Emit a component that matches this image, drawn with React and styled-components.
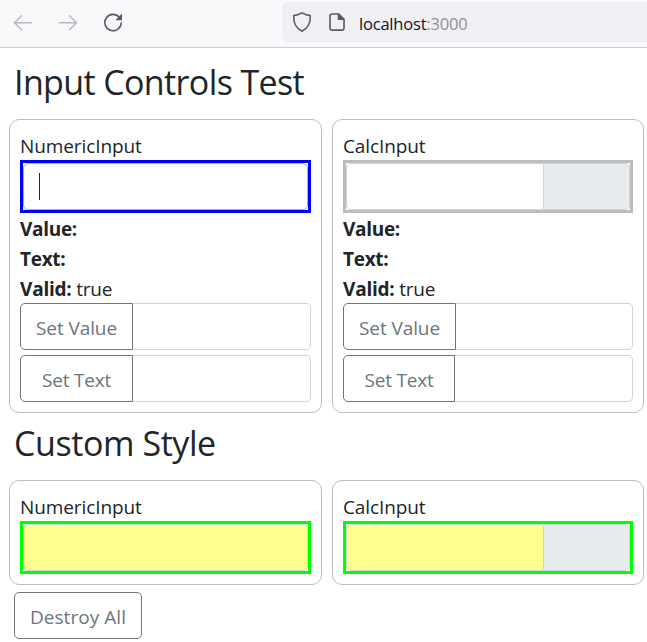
import React from "react";
import styled, { createGlobalStyle } from "styled-components";

const Global = createGlobalStyle`
  *, *::before, *::after { box-sizing: border-box; }
  body {
    margin: 0;
    overflow: hidden;
    background: #fff;
    color: #212529;
    font: 400 19px/30px "Open Sans", "Noto Sans", sans-serif;
  }
`;

const Toolbar = styled.header`
  display: flex;
  height: 48px;
  padding: 2px 0 0 11px;
  background: #f9f9fb;
  border-bottom: 1px solid #ccccd1;
`;

const NavIcons = styled.div`
  display: flex;
  gap: 21px;
  width: 271px;
  padding-top: 9px;
`;

const Icon = styled.svg`
  display: block;
  width: 24px;
  height: 24px;
  flex: none;
  fill: none;
  stroke: ${(p) => (p.$muted ? "#b9b9be" : "#5b5b66")};
  stroke-width: ${(p) => (p.$muted ? 1.5 : 1.6)};
  stroke-linecap: round;
  stroke-linejoin: round;
`;

const AddressBar = styled.div`
  display: flex;
  flex: 1;
  height: 40px;
  padding: 8px 0 0 8px;
  gap: 11px;
  background: #f0f0f4;
  border-radius: 5px 0 0 5px;
`;

const Address = styled.span`
  margin-left: -1px;
  font-size: 16.5px;
  line-height: 28px;
  letter-spacing: -0.2px;
  color: #15141a;
`;

const Port = styled.span`
  color: #8f8f95;
`;

const Page = styled.main`
  padding: 11px 3px 0 9px;
`;

const Title = styled.h1`
  margin: 0;
  padding: ${(p) => (p.$second ? "9px" : "2px")} 5px 0;
  height: ${(p) => (p.$second ? "67px" : "60px")};
  font-weight: 400;
  font-size: 34px;
  line-height: 42px;
  letter-spacing: ${(p) => p.$spacing};
`;

const Columns = styled.div`
  display: grid;
  grid-template-columns: 313px 312px;
  column-gap: 10px;
`;

const Card = styled.section`
  padding: 10px;
  border: 1px solid #bdbdbd;
  border-radius: 10px;
`;

const Line = styled.div`
  height: 30px;
  padding-top: 1px;
  letter-spacing: ${(p) => p.$spacing || "-0.22px"};
`;

const Label = styled(Line)`
  letter-spacing: ${(p) => p.$spacing || "-0.1px"};
`;

const Frame = styled.div`
  display: flex;
  height: 53px;
  border: 3px solid ${(p) => p.$color};
`;

const Field = styled.div`
  display: flex;
  align-items: center;
  flex: 1;
  padding-left: 15px;
  background: ${(p) => p.$fill || "#fff"};
  border: 1px solid ${(p) => (p.$focused ? "#86b7fe" : "#ced4da")};
  border-radius: ${(p) => (p.$joined ? "5px 0 0 5px" : "5px")};
`;

const Caret = styled.span`
  width: 1px;
  height: 27px;
  background: #212529;
`;

const Addon = styled.div`
  width: 86px;
  background: #e9ecef;
  border: 1px solid #ced4da;
  border-left: 0;
  border-radius: 0 5px 5px 0;
`;

const Group = styled.div`
  display: flex;
  height: 47px;
  & + & { margin-top: 5px; }
`;

const Button = styled.button`
  width: ${(p) => p.$width};
  height: 47px;
  padding: 2px 0 0;
  background: #fff;
  border: 1px solid #6c757d;
  border-radius: ${(p) => (p.$joined ? "5px 0 0 5px" : "5px")};
  color: #6c757d;
  font: inherit;
  letter-spacing: ${(p) => p.$spacing};
  white-space: nowrap;
`;

const GroupField = styled.div`
  flex: 1;
  border: 1px solid #ced4da;
  border-left: 0;
  border-radius: 0 5px 5px 0;
`;

const Footer = styled.footer`
  padding: 7px 5px 0;
`;

function NumericField({ color, fill, focused }) {
  return (
    <Frame $color={color}>
      <Field $fill={fill} $focused={focused}>{focused && <Caret />}</Field>
    </Frame>
  );
}

function CalcField({ color, fill }) {
  return (
    <Frame $color={color}>
      <Field $fill={fill} $joined />
      <Addon />
    </Frame>
  );
}

function Details({ textWidth }) {
  return (
    <>
      <Line $spacing="-0.3px"><b>Value:</b></Line>
      <Line $spacing="-0.3px"><b>Text:</b></Line>
      <Line><b>Valid:</b> true</Line>
      <Group>
        <Button $joined $width="113px" $spacing="-0.1px">Set Value</Button>
        <GroupField />
      </Group>
      <Group>
        <Button $joined $width={textWidth} $spacing="-0.2px">Set Text</Button>
        <GroupField />
      </Group>
    </>
  );
}

export default function App() {
  return (
    <>
      <Global />
      <Toolbar>
        <NavIcons>
          <Icon $muted viewBox="0 0 24 24"><path d="M20.5 11.8H3.5M10.5 4.8l-7 7 7 7" /></Icon>
          <Icon $muted viewBox="0 0 24 24"><path d="M3.5 11.8h17M13.5 4.8l7 7-7 7" /></Icon>
          <Icon viewBox="0 0 24 24">
            <path d="M18.2 6.2A8.2 8.2 0 1 0 20.2 12" />
            <path d="M20.5 3.8v5h-5z" fill="#5b5b66" strokeWidth="1" />
          </Icon>
        </NavIcons>
        <AddressBar>
          <Icon viewBox="0 0 24 24">
            <path d="M12 2.9Q7.6 5.3 3.8 5.6C3.2 12.8 6 18 12 21.3c6-3.3 8.8-8.5 8.2-15.7Q16.4 5.3 12 2.9Z" />
          </Icon>
          <Icon viewBox="0 0 24 24">
            <path d="M13.5 4H7A2 2 0 0 0 5 6v12.1a2 2 0 0 0 2 2h10a2 2 0 0 0 2-2V9.3z" />
            <path d="M13.5 4v5.3h5.3z" fill="#5b5b66" />
          </Icon>
          <Address>localhost<Port>:3000</Port></Address>
        </AddressBar>
      </Toolbar>
      <Page>
        <Title $spacing="-0.62px">Input Controls Test</Title>
        <Columns>
          <Card>
            <Label>NumericInput</Label>
            <NumericField color="#0000ff" focused />
            <Details textWidth="113px" />
          </Card>
          <Card>
            <Label>CalcInput</Label>
            <CalcField color="#bdbdbd" />
            <Details textWidth="112px" />
          </Card>
        </Columns>
        <Title $second $spacing="-0.42px">Custom Style</Title>
        <Columns>
          <Card>
            <Label>NumericInput</Label>
            <NumericField color="#00ff00" fill="#ffff90" />
          </Card>
          <Card>
            <Label>CalcInput</Label>
            <CalcField color="#00ff00" fill="#ffff90" />
          </Card>
        </Columns>
        <Footer>
          <Button $width="128px" $spacing="0.05px">Destroy All</Button>
        </Footer>
      </Page>
    </>
  );
}
